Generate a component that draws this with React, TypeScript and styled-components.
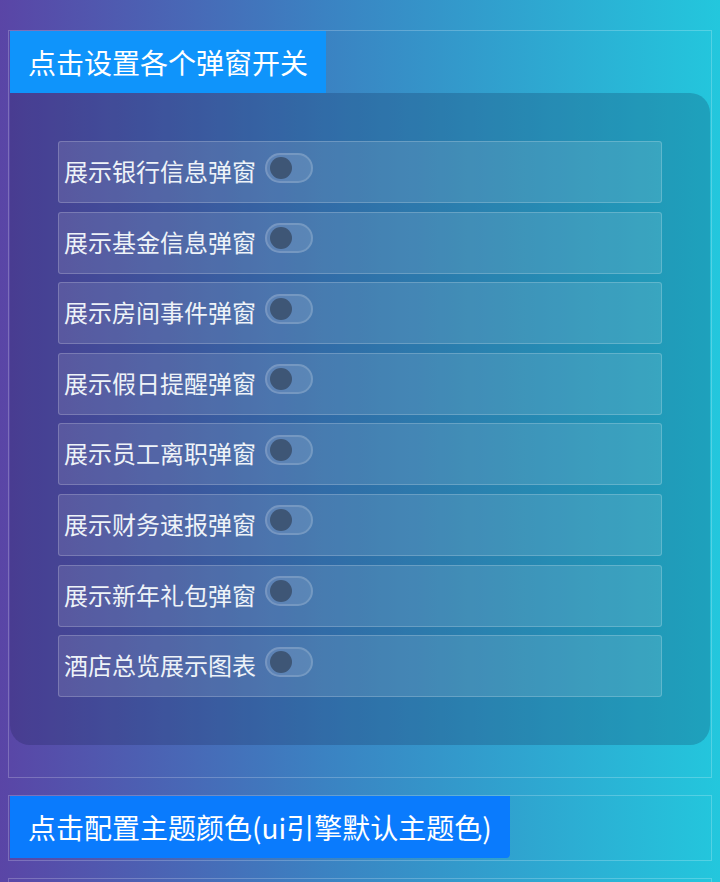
import React, { useState } from 'react';
import styled, { createGlobalStyle } from 'styled-components';

const GlobalStyle = createGlobalStyle`
  html, body {
    margin: 0;
    padding: 0;
  }
  body {
    min-height: 882px;
    background: linear-gradient(to right, #5a45a6 0%, #3b82c2 45%, #23c7dd 100%);
    font-family: "Noto Sans CJK SC", "Noto Sans", sans-serif;
    color: #fff;
  }
`;

const Page = styled.div`
  padding: 30px 8px 0 8px;
  display: flex;
  flex-direction: column;
  gap: 17px;
`;

const Section = styled.div<{ $pb?: number }>`
  border: 1px solid rgba(255, 255, 255, 0.22);
  padding: 0 1px ${p => p.$pb ?? 1}px 1px;
`;

const Title = styled.div<{ $bg: string; $round?: boolean }>`
  display: inline-block;
  background: ${p => p.$bg};
  color: #fff;
  font-size: 28px;
  line-height: 62px;
  height: 62px;
  padding: 0 18px;
  border-radius: ${p => (p.$round ? '0 0 4px 0' : '0')};
  vertical-align: top;
`;

const Panel = styled.div`
  background: rgba(10, 20, 60, 0.2);
  border-radius: 0 20px 20px 20px;
  padding: 48px;
  display: flex;
  flex-direction: column;
  gap: 8.6px;
`;

const Row = styled.div`
  height: 60px;
  border: 1px solid rgba(255, 255, 255, 0.2);
  border-radius: 3px;
  background: rgba(255, 255, 255, 0.11);
  display: flex;
  align-items: center;
  padding: 0 5px;
`;

const Label = styled.span`
  font-size: 24px;
  color: #eef3f8;
  margin-top: -3px;
  margin-right: 9px;
`;

const Toggle = styled.button<{ $on: boolean }>`
  width: 48px;
  height: 30px;
  border-radius: 15px;
  border: 2px solid rgba(255, 255, 255, 0.16);
  background: ${p => (p.$on ? '#1890ff' : 'rgba(255, 255, 255, 0.1)')};
  padding: 0;
  margin-top: -9px;
  position: relative;
  cursor: pointer;
  box-sizing: border-box;
`;

const Knob = styled.span<{ $on: boolean }>`
  position: absolute;
  top: 2px;
  left: ${p => (p.$on ? '20px' : '3px')};
  width: 22px;
  height: 22px;
  border-radius: 50%;
  background: ${p => (p.$on ? '#fff' : '#3e5676')};
`;

const items = [
  '展示银行信息弹窗',
  '展示基金信息弹窗',
  '展示房间事件弹窗',
  '展示假日提醒弹窗',
  '展示员工离职弹窗',
  '展示财务速报弹窗',
  '展示新年礼包弹窗',
  '酒店总览展示图表',
];

export default function App() {
  const [on, setOn] = useState<boolean[]>(items.map(() => false));

  return (
    <>
      <GlobalStyle />
      <Page>
        <Section $pb={32}>
          <Title $bg="#0f94fb">点击设置各个弹窗开关</Title>
          <Panel>
            {items.map((text, i) => (
              <Row key={text}>
                <Label>{text}</Label>
                <Toggle
                  $on={on[i]}
                  onClick={() => setOn(on.map((v, j) => (j === i ? !v : v)))}
                >
                  <Knob $on={on[i]} />
                </Toggle>
              </Row>
            ))}
          </Panel>
        </Section>
        <Section $pb={2}>
          <Title $bg="#0a7bfd" $round>点击配置主题颜色(ui引擎默认主题色)</Title>
        </Section>
        <Section $pb={40} />
      </Page>
    </>
  );
}
